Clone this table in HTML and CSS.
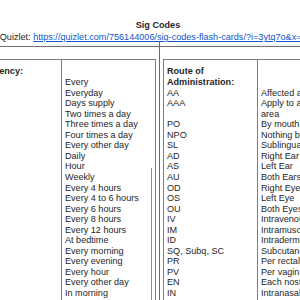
FILE: index.html
```html
<!DOCTYPE html>
<html>
<head>
<meta charset="utf-8">
<link rel="stylesheet" href="styles.css">
</head>
<body>
<div class="page">
  <div class="title">Sig Codes</div>
  <div class="quizlet">Quizlet: <a href="#">https://quizlet.com/756144006/sig-codes-flash-cards/?i=3ytq7o&amp;x=1jqt</a></div>
  <div class="outer">
    <div class="ocell ocell-left">
      <div class="nested nested-left">
        <div class="col col-l1">
          <div class="ln b">Frequency:</div>
        </div>
        <div class="col col-l2">
          <div class="ln">&nbsp;</div>
          <div class="ln">Every</div>
          <div class="ln">Everyday</div>
          <div class="ln">Days supply</div>
          <div class="ln">Two times a day</div>
          <div class="ln">Three times a day</div>
          <div class="ln">Four times a day</div>
          <div class="ln">Every other day</div>
          <div class="ln">Daily</div>
          <div class="ln">Hour</div>
          <div class="ln">Weekly</div>
          <div class="ln">Every 4 hours</div>
          <div class="ln">Every 4 to 6 hours</div>
          <div class="ln">Every 6 hours</div>
          <div class="ln">Every 8 hours</div>
          <div class="ln">Every 12 hours</div>
          <div class="ln">At bedtime</div>
          <div class="ln">Every morning</div>
          <div class="ln">Every evening</div>
          <div class="ln">Every hour</div>
          <div class="ln">Every other day</div>
          <div class="ln">In morning</div>
          <div class="ln">In the evening</div>
        </div>
      </div>
    </div>
    <div class="ocell ocell-right">
      <div class="nested nested-right">
        <div class="col col-r1">
          <div class="ln b">Route of</div>
          <div class="ln b">Administration:</div>
          <div class="ln">AA</div>
          <div class="ln">AAA</div>
          <div class="ln">&nbsp;</div>
          <div class="ln">PO</div>
          <div class="ln">NPO</div>
          <div class="ln">SL</div>
          <div class="ln">AD</div>
          <div class="ln">AS</div>
          <div class="ln">AU</div>
          <div class="ln">OD</div>
          <div class="ln">OS</div>
          <div class="ln">OU</div>
          <div class="ln">IV</div>
          <div class="ln">IM</div>
          <div class="ln">ID</div>
          <div class="ln">SQ, Subq, SC</div>
          <div class="ln">PR</div>
          <div class="ln">PV</div>
          <div class="ln">EN</div>
          <div class="ln">IN</div>
        </div>
        <div class="col col-r2">
          <div class="ln">&nbsp;</div>
          <div class="ln">&nbsp;</div>
          <div class="ln">Affected area</div>
          <div class="ln">Apply to affected area</div>
          <div class="ln">By mouth</div>
          <div class="ln">Nothing by mouth</div>
          <div class="ln">Sublingual</div>
          <div class="ln">Right Ear</div>
          <div class="ln">Left Ear</div>
          <div class="ln">Both Ears</div>
          <div class="ln">Right Eye</div>
          <div class="ln">Left Eye</div>
          <div class="ln">Both Eyes</div>
          <div class="ln">Intravenous</div>
          <div class="ln">Intramuscular</div>
          <div class="ln">Intradermal</div>
          <div class="ln">Subcutaneous</div>
          <div class="ln">Per rectal</div>
          <div class="ln">Per vaginal</div>
          <div class="ln">Each nostril</div>
          <div class="ln">Intranasal</div>
        </div>
      </div>
    </div>
  </div>
</div>
</body>
</html>
```
FILE: styles.css
```css
html, body {
  margin: 0;
  padding: 0;
  background: #ffffff;
  overflow: hidden;
}
body {
  width: 300px;
  height: 300px;
  font-family: "Liberation Sans", Arial, sans-serif;
  font-size: 9.1px;
  line-height: 10.55px;
  color: #262626;
}
.page {
  margin-left: -36px;
  width: 388px;
  padding-top: 19.5px;
}
.title {
  text-align: center;
  font-weight: bold;
  white-space: nowrap;
}
.quizlet {
  margin-top: 2px;
  text-align: center;
  white-space: nowrap;
}
.quizlet a {
  color: #1155cc;
  text-decoration: underline;
}
.outer {
  margin-top: 3.5px;
  display: flex;
  border-top: 1px solid #6f6f6f;
  height: 400px;
}
.ocell {
  padding-top: 12px;
  box-sizing: border-box;
}
.ocell-left {
  width: 195px;
  padding-left: 4px;
  padding-right: 3px;
}
.ocell-right {
  position: relative;
  border-left: 1px solid #6a6a6a;
  padding-left: 3px;
  padding-right: 3px;
}
.ocell-right::before {
  content: "";
  position: absolute;
  left: -1px;
  top: -5px;
  height: 5px;
  border-left: 1px solid #6a6a6a;
}
.nested {
  display: flex;
  border: 1px solid #7d7d7d;
  border-bottom: none;
  height: 360px;
  position: relative;
}
.nested-left {
  width: 188px;
  box-sizing: border-box;
}
.nested-left::after {
  content: "";
  position: absolute;
  right: 3px;
  top: 108px;
  bottom: 0;
  border-left: 1px solid #8a8a8a;
}
.col {
  box-sizing: border-box;
  padding: 6.4px 3px 0 3px;
}
.col-l1 {
  width: 92px;
  padding-left: 5px;
}
.col-l2 {
  flex: 1;
  border-left: 1px solid #7d7d7d;
}
.col-r1 {
  width: 93px;
  padding-left: 3px;
}
.col-r2 {
  width: 91px;
  border-left: 1px solid #7d7d7d;
}
.ln {
  white-space: normal;
}
.col-l2 .ln, .col-r1 .ln {
  white-space: nowrap;
}
.b {
  font-weight: bold;
}
```
